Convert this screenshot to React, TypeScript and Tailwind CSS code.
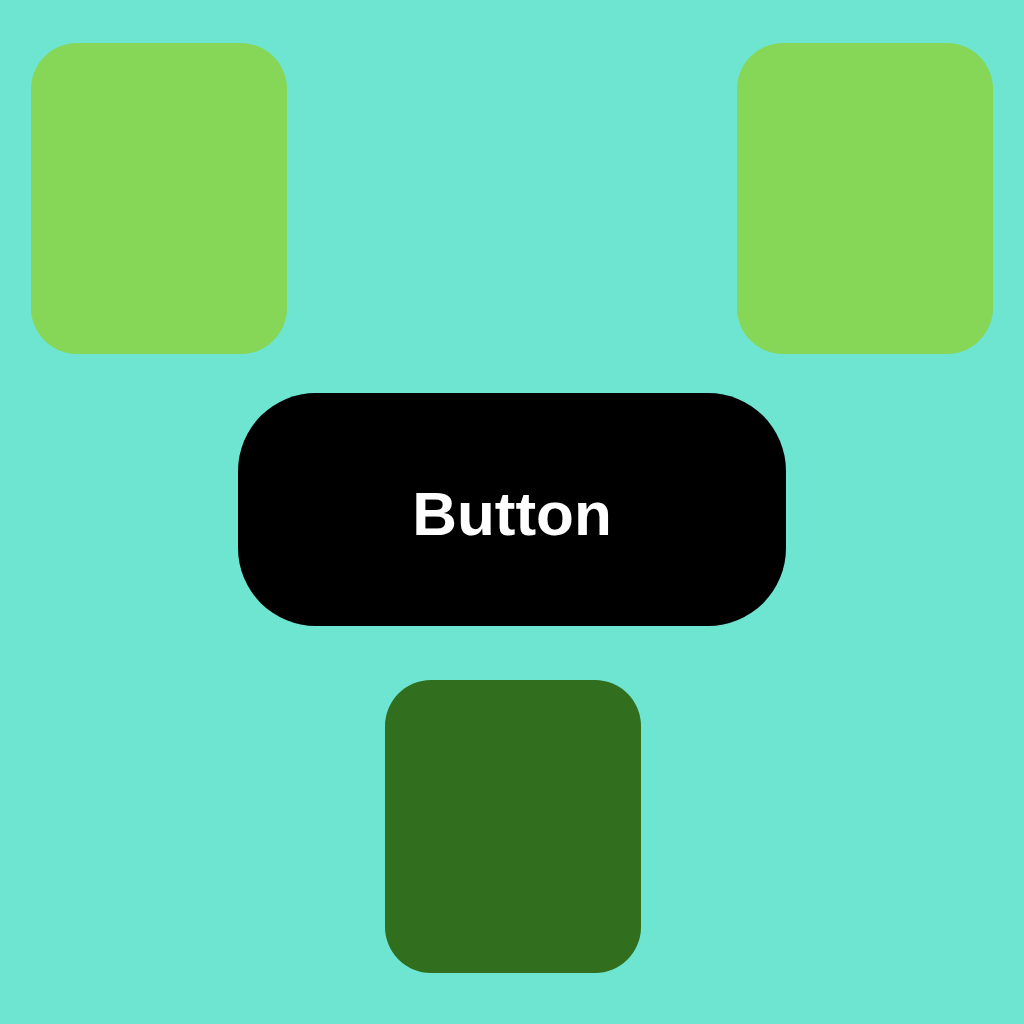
import React from "react";

export default function App() {
  return (
    <div className="w-[1024px] h-[1024px] bg-[#6de5d1] flex flex-col items-center pt-[43px]">
      <div className="w-full flex justify-between px-[31px]">
        <div className="w-[256px] h-[311px] rounded-[46px] bg-[#86d757]" />
        <div className="w-[256px] h-[311px] rounded-[46px] bg-[#86d757]" />
      </div>
      <button
        className="mt-[39px] w-[548px] h-[233px] rounded-[78px] bg-black text-white font-bold text-[62px] flex items-center justify-center pt-[8px]"
        style={{ fontFamily: '"Liberation Sans", Arial, sans-serif' }}
      >
        Button
      </button>
      <div className="mt-[54px] ml-[2px] w-[256px] h-[293px] rounded-[46px] bg-[#316f1f]" />
    </div>
  );
}
